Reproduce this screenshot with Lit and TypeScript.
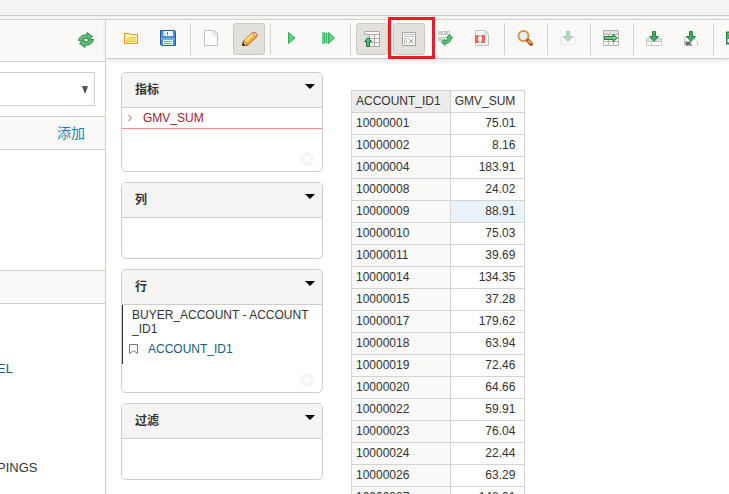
import { LitElement, html, css, svg, nothing } from "lit";
import { customElement, property } from "lit/decorators.js";
import { classMap } from "lit/directives/class-map.js";

const downArrow = svg`<path d="M6.500 1.500h3v5h3L8 11.500 3.500 6.500h3z" fill="#3fae5c" stroke="#238a42"/>`;
const page = svg`<path d="M1.500.5h10l3 3.500v11.500h-13z" fill="#fcfcfb" stroke="#c4c3bb"/><path d="M9 1h2.500l2.500 3v3L9 5z" fill="#efeeec"/><path d="M11.500.5v3.500h3" stroke="#d6d5d0"/>`;

const icons: Record<string, unknown> = {
  refresh: svg`
    <path d="M.5 8.500C1.500 4.500 4.500 2.500 9 3V.5l5.500 4L10 8.500V6.500C7 6 5 6.500 3.500 9z" fill="#62bd78" stroke="#2c8d49"/>
    <path d="M15.500 7.500c-1 4-4 6-8.500 5.500v2.500l-5.500-4L6 7.500v2c3 .5 5 0 6.500-2z" fill="#62bd78" stroke="#2c8d49"/>`,
  folder: svg`
    <path d="M1.500 13.500v-10h5l1 1h7v9z" fill="#f9d66a" stroke="#e5992b"/>
    <path d="M2 4h5v1h7v2H2z" fill="#fff3c4"/>
    <path d="M2.500 12.500v-5h3l1-1h7v6z" fill="#fcdf62" stroke="#fff0b0"/>
    <path d="M3 11h10v1H3z" fill="#f9c93c"/>`,
  save: svg`
    <path d="M.5.5h14l1 1v14H1.500l-1-1z" fill="#4a90d4" stroke="#1d5fa8"/>
    <path d="M3 1h10v5H3z" fill="#f5f9fd"/><path d="M3 1h2v5H3z" fill="#b8d3ed"/><path d="M7 2h1v3H7z" fill="#3979bb"/>
    <path d="M1 8h14v2H1z" fill="#6facdf"/>
    <path d="M3 10h10v5H3z" fill="#eef6ea"/><path d="M4 11h8v1H4zM4 13h8v1H4z" fill="#6fc45c"/>`,
  page,
  edit: svg`
    <path d="M2.500 15.500l1-4.500 9-8.500h3l1.500 2v2l-9 8.500z" fill="#f9bd45" stroke="#bd6c28"/>
    <path d="M5.500 11l7.500-7" stroke="#ffe68a" stroke-width="2"/><path d="M8 13.500L15.500 6.500" stroke="#f0982c"/>
    <path d="M12.500 2.500h3l1.500 2v2l-1.500.5-3.500-3.500z" fill="#f4c4a8" stroke="#c47a4d"/>
    <path d="M2.500 15.500l1-4.500 4.500 4z" fill="#f7dcb4" stroke="#9d5c2b"/><path d="M2 13h2v1h1v2H2z" fill="#6d3517"/>`,
  play: svg`<path d="M5.500 2.500L12 8l-6.500 5.500z" fill="#5fcf80" stroke="#2fad59"/>`,
  playAll: svg`
    <path d="M2 2h3v12H2z" fill="#6fd28b"/><path d="M4 3h1v10H4zM6 3h1v10H6z" fill="#2fad59"/><path d="M5 3h1v10H5zM7 3h1v10H7z" fill="#93dfa9"/>
    <path d="M8.500 2.500L14.500 8l-6 5.500z" fill="#62d083" stroke="#2fad59"/>`,
  hierarchy: svg`
    <path d="M1.500 1.500h15v3h-15zM6.500 4.500h10v12h-10zM11.500 4.500v12M6.500 8.500h10M6.500 12.500h10" fill="#fafaf9" stroke="#a9a8a4"/>
    <path d="M5 7.500l3.500 4h-2v5h-3v-5h-2z" fill="#52b86f" stroke="#1c7d3c"/>`,
  hide: svg`
    <path d="M2.500 2.500h13v13h-13z" fill="#fcfcfb" stroke="#a3a29e"/>
    <path d="M4.500 4.500h9v2h-9zM4.500 8.500h2v5h-2z" fill="#fff" stroke="#c3c2be"/>
    <path d="M8.500 8.500l5 5M13.500 8.500l-5 5" stroke="#a3a29e"/>`,
  swap: svg`
    <path d="M1 1h4v4H1zM1 7h4v4H1z" fill="#d0cfca"/>
    <path d="M5.500 1.500h7v3h-7zM5.500 7.500h7v3h-7z" fill="#fff" stroke="#c3c2be"/><path d="M7 3h4" stroke="#7dacc4"/>
    <path d="M12.500 4.500L15.500 8h-1.500c0 3.500-2 5.500-6 5.500v2L4.500 12l3.500-3v1.500c2.500 0 3-1 3-2.500H9.500z" fill="#5cc477" stroke="#2a9549"/>`,
  brackets: svg`${page}<path d="M1 5h4v2H4v4h1v2H1zM7 5h4v8H7v-2h1V7H7z" fill="#fb625a"/>`,
  search: svg`
    <circle cx="6.500" cy="6" r="5" fill="#e6eef9" stroke="#d8943c" stroke-width="2"/>
    <path d="M11 10.500l3 3.500" stroke="#a84f23" stroke-width="4" stroke-linecap="round"/>
    <path d="M11 10.500l3 3" stroke="#ee9b4e" stroke-width="2"/>`,
  drop: svg`<g opacity=".4"><path d="M.5 7.500h15v7H.5zM2.500 9v4" fill="#fff" stroke="#d4d3ce"/>${downArrow}</g>`,
  tableRight: svg`
    <path d="M.5.5h15v15H.5z" fill="#fdfdfc" stroke="#b5b4af"/><path d="M1 1h14v3H1z" fill="#e2e1de"/>
    <path d="M.5 4.500h15M.5 11.500h15M5.500 4.500v11M10.500 4.500v11" stroke="#b5b4af"/>
    <path d="M1.500 6.500h8.500v-2L14.500 8 10 11.500v-2H1.500z" fill="#6bcb86" stroke="#1b7c3c"/>`,
  importRow: svg`
    <path d="M.5 8.500h15v3H.5zM.5 11.500h15v4H.5zM5.500 11.500v4" fill="#fdfdfc" stroke="#c8c7c2"/><path d="M1 9h14v2H1z" fill="#e4e3df"/>${downArrow}`,
  importSettings: svg`
    <path d="M1.500 16V7.500h9l4 4V16" fill="#fdfdfc" stroke="#c8c7c2"/>
    <path d="M3 11l2 1 2-1 1 2-1 2-3 1-2-2z" fill="#6e6d69"/><path d="M6 14h3v2H6z" fill="#9c9b96"/>${downArrow}`,
  exportSheet: svg`<path d="M.5 2.500h10v11H.5z" fill="#fff" stroke="#248843" stroke-width="2"/><path d="M1 8h9M1 4l8 8" stroke="#3ba65a" stroke-width="2"/>`,
};

@customElement("tool-icon")
class ToolIcon extends LitElement {
  @property() name = "page";
  static styles = css`
    :host { display: block; width: 18px; height: 18px; }
    svg { display: block; }
  `;
  render() {
    return html`<svg width="18" height="18" viewBox="0 0 18 18" fill="none" aria-hidden="true">${icons[this.name]}</svg>`;
  }
}

@customElement("drop-zone")
class DropZone extends LitElement {
  @property() label = "";
  @property({ type: Boolean }) clearable = false;
  static styles = css`
    :host {
      display: flex; flex-direction: column; box-sizing: border-box;
      border: 1px solid #cfcdc6; border-radius: 5px; background: #fff; overflow: hidden;
    }
    header {
      display: flex; justify-content: space-between; height: 34px; padding: 0 7px 0 13px;
      background: #f6f5f4; border-bottom: 1px solid #cfcdc6;
    }
    h2 { margin: 0; font-size: 12px; line-height: 34px; font-weight: 700; color: #333; }
    button { display: block; padding: 0; border: 0; background: none; color: inherit; }
    .toggle { align-self: flex-start; padding-top: 11px; }
    .body { flex: 1; display: flex; flex-direction: column; min-height: 40px; }
    .clear { margin: auto 8px 5px auto; }
    svg { display: block; }
  `;
  render() {
    return html`
      <header>
        <h2>${this.label}</h2>
        <button class="toggle" aria-label="${this.label}">
          <svg width="10" height="5" viewBox="0 0 10 5"><path d="M0 0h10L5 5z" fill="#000"/></svg>
        </button>
      </header>
      <div class="body">
        <slot></slot>
        ${this.clearable
          ? html`<button class="clear" aria-label="清除">
              <svg width="14" height="14" viewBox="0 0 14 14" fill="none"><circle cx="7" cy="7" r="7" fill="#f6f5f4"/><path d="M4 4l6 6M10 4l-6 6" stroke="#fff" stroke-width="2"/></svg>
            </button>`
          : nothing}
      </div>`;
  }
}

interface Tool { icon: string; label: string; pressed?: boolean; marked?: boolean; disabled?: boolean }

const toolGroups: Tool[][] = [
  [{ icon: "folder", label: "打开" }, { icon: "save", label: "保存" }],
  [{ icon: "page", label: "新建" }, { icon: "edit", label: "编辑", pressed: true }],
  [{ icon: "play", label: "运行" }, { icon: "playAll", label: "自动执行" }],
  [
    { icon: "hierarchy", label: "隐藏父级", pressed: true },
    { icon: "hide", label: "隐藏空白", pressed: true, marked: true },
    { icon: "swap", label: "交换轴" },
    { icon: "brackets", label: "显示代码" },
  ],
  [{ icon: "search", label: "查找" }],
  [{ icon: "drop", label: "钻取", disabled: true }],
  [{ icon: "tableRight", label: "钻取导出" }],
  [{ icon: "importRow", label: "导出" }, { icon: "importSettings", label: "导出设置" }],
  [{ icon: "exportSheet", label: "导出表格" }],
];

const rows: [string, string][] = [
  ["10000001", "75.01"], ["10000002", "8.16"], ["10000004", "183.91"], ["10000008", "24.02"],
  ["10000009", "88.91"], ["10000010", "75.03"], ["10000011", "39.69"], ["10000014", "134.35"],
  ["10000015", "37.28"], ["10000017", "179.62"], ["10000018", "63.94"], ["10000019", "72.46"],
  ["10000020", "64.66"], ["10000022", "59.91"], ["10000023", "76.04"], ["10000024", "22.44"],
  ["10000026", "63.29"], ["10000027", "148.91"],
];

@customElement("app-root")
class AppRoot extends LitElement {
  static styles = css`
    :host {
      display: flex; flex-direction: column; height: 100vh; overflow: hidden;
      background: #fff; color: #333;
      font: 12px/14px "Liberation Sans", Arial, "Noto Sans CJK SC", sans-serif;
    }
    button { font: inherit; color: inherit; }
    a { text-decoration: none; }
    .top { flex: none; height: 15px; background: #f5f4f2; border-bottom: 1px solid #cfcdc6; }
    .frame { flex: 1; min-height: 0; display: flex; flex-direction: column; background: #f5f4f2; }
    .layout {
      flex: 1; min-height: 0; display: grid; grid-template-columns: 106px minmax(0, 1fr);
      margin-top: 3px; border-top: 1px solid #cfcdc6;
    }

    .sidebar { background: #fff; border-right: 1px solid #cfcdc6; overflow: hidden; }
    .bar {
      display: flex; align-items: center; justify-content: flex-end; height: 32px;
      background: #faf9f8; border: solid #cfcdc6; border-width: 1px 0;
    }
    .head { height: 41px; padding-right: 9px; border-top: 0; }
    .bar button { padding: 0; border: 0; background: none; }
    .add { padding-right: 20px; font-size: 14px; line-height: 20px; }
    .add a { color: #0a88b5; }
    .cube { display: flex; padding: 10px 10px 10px 0; }
    select {
      appearance: none; flex: 1; height: 34px; border: 1px solid #d0d0d6; border-left: 0; border-radius: 0;
      background: #fff; margin: 0; padding: 0 6px;
    }
    .pick { position: relative; flex: 1; display: flex; }
    .pick svg { position: absolute; right: 7px; top: 14px; pointer-events: none; }
    .dims { min-height: 120px; }
    .tree { margin: 0 0 0 -3px; padding: 48px 0; list-style: none; font-size: 13px; line-height: 33px; }
    .tree li { height: 33px; }
    .tree a { color: #145c80; }

    .main { display: flex; flex-direction: column; min-width: 0; background: #fff; }
    .toolbar {
      display: flex; gap: 5px; height: 32px; flex: none; padding: 3px 0 3px 10px;
      background: #faf9f8; border-bottom: 1px solid #cfcdc6; box-shadow: 0 2px 5px #e6e4e0;
    }
    .toolbar > * { flex: none; }
    .sep { width: 1px; background: #d3d2cd; }
    .slot { position: relative; }
    .tool {
      display: block; box-sizing: border-box; width: 32px; height: 32px; padding: 6px;
      border: 1px solid transparent; border-radius: 3px; background: none;
    }
    .pressed { background: #e2e0dc; border-color: #cbc9c1; }
    .mark { position: absolute; inset: -6px -10px -4px -5px; border: 3px solid #ed1c24; pointer-events: none; z-index: 1; }

    .work { display: flex; align-items: flex-start; gap: 28px; padding: 13px 15px; min-height: 0; }
    .zones { flex: none; width: 202px; display: flex; flex-direction: column; gap: 10px; }
    .measures { min-height: 100px; }
    .rows { min-height: 124px; }
    .item { display: flex; align-items: center; height: 20px; gap: 9px; padding-left: 4px; }
    .item svg { flex: none; }
    .measure { border-bottom: 1px solid #f58b85; }
    .measure a { color: #a8162c; }
    .level { border-left: 1px solid #333; height: 56px; padding: 3px 0 0 9px; }
    .level p { margin: 0 0 3px; max-width: 180px; word-break: break-all; }
    .level .item { padding: 0; margin-left: -3px; gap: 10px; }
    .level a { color: #146080; }

    table { margin-top: 18px; border-collapse: collapse; }
    th, td { box-sizing: border-box; height: 22px; padding: 0 9px 1px 4px; border: 1px solid #d5d4d0; font-weight: 400; line-height: 14px; }
    th { text-align: left; background: #faf9f8; }
    .corner { background: #eeecea; }
    td { text-align: right; }
    .hover { background: #ebf3fa; }
  `;

  private tool(t: Tool) {
    return html`<div class="slot">
      <button class=${classMap({ tool: true, pressed: !!t.pressed })} aria-label=${t.label} ?disabled=${!!t.disabled}>
        <tool-icon name=${t.icon}></tool-icon>
      </button>
      ${t.marked ? html`<div class="mark"></div>` : nothing}
    </div>`;
  }

  render() {
    return html`
      <div class="top"></div>
      <div class="frame">
        <div class="layout">
          <aside class="sidebar">
            <div class="bar head"><button aria-label="刷新"><tool-icon name="refresh"></tool-icon></button></div>
            <div class="cube">
              <div class="pick">
                <select aria-label="多维数据"><option></option></select>
                <svg width="6" height="7" viewBox="0 0 6 7"><path d="M0 0h6L3.500 7h-1z" fill="#555"/></svg>
              </div>
            </div>
            <div class="bar add"><a href="#">添加</a></div>
            <div class="dims"></div>
            <div class="bar"></div>
            <ul class="tree">
              <li><a href="#">EL</a></li>
              <li></li>
              <li></li>
              <li>PINGS</li>
            </ul>
          </aside>
          <main class="main">
            <div class="toolbar" role="toolbar">
              ${toolGroups.map((g, i) => html`${i ? html`<span class="sep"></span>` : nothing}${g.map((t) => this.tool(t))}`)}
            </div>
            <div class="work">
              <div class="zones">
                <drop-zone class="measures" label="指标" clearable>
                  <div class="item measure">
                    <svg width="8" height="8" viewBox="0 0 8 8" fill="none"><path d="M2.500 1L5.500 4 2.500 7" stroke="#a05a50"/></svg>
                    <a href="#">GMV_SUM</a>
                  </div>
                </drop-zone>
                <drop-zone label="列"></drop-zone>
                <drop-zone class="rows" label="行" clearable>
                  <div class="level">
                    <p>BUYER_ACCOUNT - ACCOUNT_ID1</p>
                    <div class="item">
                      <svg width="9" height="10" viewBox="0 0 9 10" fill="none"><path d="M.5.5h8v9l-4-3-4 3z" stroke="#777"/></svg>
                      <a href="#">ACCOUNT_ID1</a>
                    </div>
                  </div>
                </drop-zone>
                <drop-zone label="过滤"></drop-zone>
              </div>
              <table>
                <thead><tr><th class="corner">ACCOUNT_ID1</th><th>GMV_SUM</th></tr></thead>
                <tbody>
                  ${rows.map(([id, sum]) => html`<tr><th scope="row">${id}</th><td class=${classMap({ hover: id === "10000009" })}>${sum}</td></tr>`)}
                </tbody>
              </table>
            </div>
          </main>
        </div>
      </div>`;
  }
}
